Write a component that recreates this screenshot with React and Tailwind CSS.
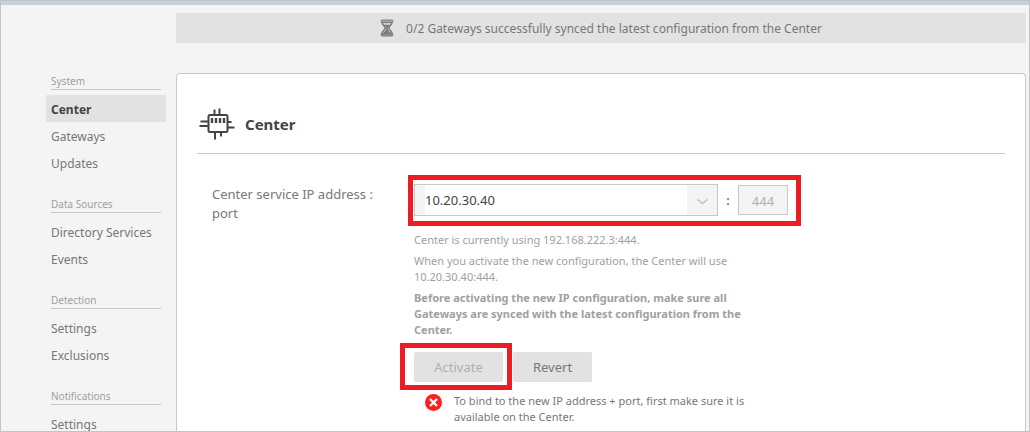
const sections = [
  { title: "System", items: ["Center", "Gateways", "Updates"] },
  { title: "Data Sources", items: ["Directory Services", "Events"] },
  { title: "Detection", items: ["Settings", "Exclusions"] },
  { title: "Notifications", items: ["Settings"] },
];

function HourglassIcon() {
  return (
    <svg width="14" height="18" viewBox="0 0 14 18" fill="none" aria-hidden="true">
      <path d="M2 3C2 6.500 5.300 7.500 5.300 9C5.300 10.500 2 11.500 2 15H12C12 11.500 8.700 10.500 8.700 9C8.700 7.500 12 6.500 12 3Z" fill="#d8d8d8" stroke="#7b7d7b" strokeWidth="1.600" />
      <path d="M3.500 5.800H10.500L7.800 8.500V10.500L11 14.500H3L6.200 10.500V8.500Z" fill="#7b7d7b" />
      <rect x="1" y="1" width="12" height="2.600" rx="1.200" fill="#a5a7a5" stroke="#7b7d7b" />
      <rect x="1" y="14.400" width="12" height="2.600" rx="1.200" fill="#8b8d8b" stroke="#7b7d7b" />
    </svg>
  );
}

function ChipIcon() {
  return (
    <svg width="36" height="32" viewBox="0 0 36 32" fill="none" stroke="#444" strokeWidth="2" aria-hidden="true">
      <rect x="9.500" y="7" width="19" height="17" rx="1.500" />
      <path d="M15.500 1.500V7M20.500 0.500V7M16 24V31.500M22 24V28.500M1.500 13.500H9M0.500 18H9M29 14H32.500M29 19.500H35.500" />
      <path d="M13 10V15M17 10V15M21 10V15M25 10V15" strokeWidth="2.400" />
    </svg>
  );
}

function ErrorIcon() {
  return (
    <svg className="mt-px shrink-0" width="17" height="17" viewBox="0 0 17 17" aria-hidden="true">
      <circle cx="8.500" cy="8.500" r="8.500" fill="#fb1f1f" />
      <path d="M5 5L12 12M12 5L5 12" stroke="#fff" strokeWidth="2.400" />
    </svg>
  );
}

function Sidebar() {
  return (
    <nav aria-label="Configuration" className="ml-[45px] mr-2.5 flex w-[120px] shrink-0 flex-col gap-[19px] pt-[67px]">
      {sections.map((section) => (
        <section key={section.title}>
          <h2 className="mx-[5px] mb-[5px] border-b border-[#c8c8c8] pt-0.5 text-[10px] leading-[15px] text-[#9f9f9f]">
            {section.title}
          </h2>
          <ul>
            {section.items.map((item) => (
              <li key={item}>
                <a
                  href="#"
                  aria-current={item === "Center" ? "page" : undefined}
                  className={
                    item === "Center"
                      ? "block bg-[#e2e2e2] px-[5px] pt-0.5 text-[12px] font-bold leading-[25px] text-[#444]"
                      : "block whitespace-nowrap px-[5px] pt-0.5 text-[12px] leading-[25px] text-[#777]"
                  }
                >
                  {item}
                </a>
              </li>
            ))}
          </ul>
        </section>
      ))}
    </nav>
  );
}

function Highlight({ className }) {
  return <div aria-hidden="true" className={"pointer-events-none absolute border-[5px] border-[#ed1c24] " + className} />;
}

export default function App() {
  return (
    <div className="flex h-screen flex-col overflow-hidden border border-[#c3c3c3] bg-[#f4f4f4] font-['Noto_Sans','Open_Sans',sans-serif] text-[13px] text-[#777]">
      <div className="h-1 shrink-0 bg-[#c5cfe3]" />
      <div className="flex min-h-0 flex-1">
        <Sidebar />
        <main className="mr-[3px] flex min-w-0 flex-1 flex-col pt-2">
          <div role="status" className="flex h-[30px] shrink-0 items-center justify-center gap-3 bg-[#e2e2e2] text-[12px]">
            <HourglassIcon />
            <span className="pt-0.5">0/2 Gateways successfully synced the latest configuration from the Center</span>
          </div>
          <div className="mt-[30px] flex-1 rounded-t border border-b-0 border-[#c8c8c8] bg-white px-5">
            <header className="flex items-center gap-2.5 border-b border-[#c8c8c8] pb-[13px] pl-0.5 pt-[34px]">
              <ChipIcon />
              <h1 className="text-[15px] font-bold leading-5 text-[#444]">Center</h1>
            </header>
            <form className="flex pl-[15px] pt-[30px]">
              <label htmlFor="address" className="mr-5 w-[182px] shrink-0 pt-px leading-[19px]">
                Center service IP address : port
              </label>
              <div>
                <div className="relative flex items-center">
                  <div className="flex h-8 w-[304px] border border-[#c8c8c8] bg-[#f4f4f4] pl-2.5">
                    <select id="address" className="min-w-0 flex-1 appearance-none bg-white pt-0.5 text-[13px] text-[#444]">
                      <option>10.20.30.40</option>
                    </select>
                    <span className="flex w-[30px] items-center justify-center">
                      <svg className="mt-1" width="11" height="6" viewBox="0 0 11 6" fill="none" stroke="#c0c0c0" strokeWidth="1.500" aria-hidden="true">
                        <path d="M0.500 0.500L5.500 4.500L10.500 0.500" />
                      </svg>
                    </span>
                  </div>
                  <span className="w-5 pt-0.5 text-center text-[#444]">:</span>
                  <input
                    aria-label="Port"
                    disabled
                    defaultValue="444"
                    className="h-[30px] w-[50px] border border-[#c8c8c8] bg-[#f4f4f4] pt-0.5 text-center text-[13px] text-[#b0b0b0]"
                  />
                  <Highlight className="-bottom-2.5 -left-1.5 -right-[13px] -top-[9px]" />
                </div>
                <div className="mt-4 flex max-w-[350px] flex-col gap-[5px] text-[11px] leading-4 text-[#a0a0a0]">
                  <p>Center is currently using 192.168.222.3:444.</p>
                  <p>When you activate the new configuration, the Center will use 10.20.30.40:444.</p>
                  <p className="font-bold">
                    Before activating the new IP configuration, make sure all Gateways are synced with the latest configuration from the Center.
                  </p>
                </div>
                <div className="mt-3.5 flex gap-2.5">
                  <div className="relative">
                    <button type="button" disabled className="h-[30px] w-[89px] rounded-[2px] bg-[#e2e2e2] pt-0.5 text-[#b0b0b0]">
                      Activate
                    </button>
                    <Highlight className="-bottom-2 -left-3.5 -right-[9px] -top-[9px]" />
                  </div>
                  <button type="button" className="h-[30px] w-[79px] rounded-[2px] bg-[#e2e2e2] pt-0.5">
                    Revert
                  </button>
                </div>
                <div role="alert" className="mt-[11px] flex max-w-[352px] gap-3 pl-[11px] text-[11px] leading-4">
                  <ErrorIcon />
                  <p>To bind to the new IP address + port, first make sure it is available on the Center.</p>
                </div>
              </div>
            </form>
          </div>
        </main>
      </div>
    </div>
  );
}
